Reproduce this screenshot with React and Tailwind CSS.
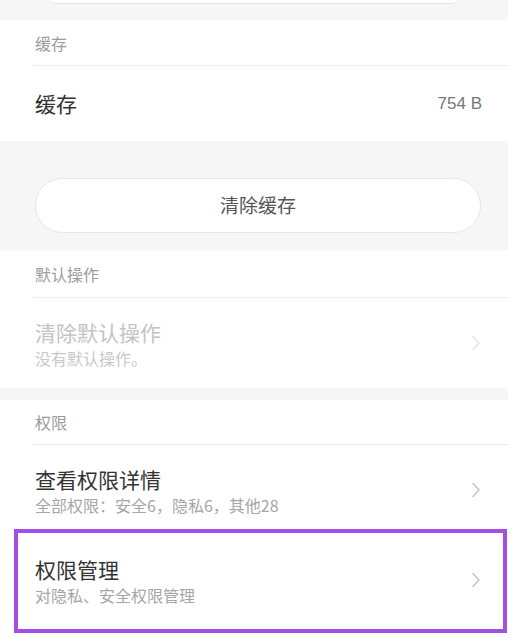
import React from "react";

const font = { fontFamily: '"Noto Sans CJK SC", "Noto Sans", sans-serif' };

function Chevron({ light }) {
  return (
    <svg width="10" height="16" viewBox="0 0 10 16" fill="none">
      <path
        d="M2 1.5 L8 8 L2 14.5"
        stroke={light ? "#e4e4e4" : "#c4c4c4"}
        strokeWidth="1.5"
        strokeLinecap="round"
        strokeLinejoin="round"
      />
    </svg>
  );
}

export default function App() {
  return (
    <div className="w-[520px] h-[641px] bg-white overflow-hidden" style={font}>
      <div className="w-[508px]">
        {/* top gray band with bottom of previous button */}
        <div className="h-[20px] bg-[#f6f6f6]">
          <div className="mx-[52px] h-[4px] bg-white border-b border-[#e4e4e4] rounded-b-full" />
        </div>

        {/* cache section */}
        <div className="bg-white">
          <div className="h-[46px] flex items-center ml-[33px] pl-[2px] border-b border-[#ededed] text-[16px] text-[#9c9c9c]">
            缓存
          </div>
          <div className="h-[75px] flex items-center justify-between pl-[35px] pr-[26px]">
            <span className="text-[21px] text-[#333]">缓存</span>
            <span className="text-[17px] text-[#777]" style={{ fontFamily: '"Liberation Sans", sans-serif' }}>754 B</span>
          </div>
        </div>

        {/* gray with button */}
        <div className="h-[109px] bg-[#f6f6f6] pl-[35px] pr-[27px] pt-[37px]">
          <div className="w-full h-[55px] rounded-full bg-white border border-[#e6e6e6] flex items-center justify-center text-[19px] text-[#555]">
            清除缓存
          </div>
        </div>

        {/* default action section */}
        <div className="bg-white">
          <div className="h-[48px] flex items-center ml-[33px] pl-[2px] border-b border-[#ededed] text-[16px] text-[#9c9c9c]">
            默认操作
          </div>
          <div className="h-[90px] flex items-center justify-between pl-[35px] pr-[27px]">
            <div className="flex flex-col">
              <span className="text-[21px] leading-[30px] text-[#c4c4c4]">清除默认操作</span>
              <span className="text-[16px] leading-[23px] text-[#c8c8c8]">没有默认操作。</span>
            </div>
            <Chevron light />
          </div>
        </div>

        <div className="h-[12px] bg-[#f6f6f6]" />

        {/* permissions section */}
        <div className="bg-white">
          <div className="h-[45px] flex items-center ml-[33px] pl-[2px] border-b border-[#e8e8e8] text-[16px] text-[#9c9c9c]">
            权限
          </div>
          <div className="h-[84px] flex items-center justify-between pl-[35px] pr-[27px] pt-[6px]">
            <div className="flex flex-col">
              <span className="text-[21px] leading-[30px] text-[#333]">查看权限详情</span>
              <span className="text-[16px] leading-[23px] text-[#a6a6a6]">全部权限：安全6，隐私6，其他28</span>
            </div>
            <Chevron />
          </div>
          <div className="ml-[14px] mr-[1px] h-[104px] border-[4px] border-[#a24fe4] flex items-center justify-between pl-[17px] pr-[22px] pb-[2px]">
            <div className="flex flex-col">
              <span className="text-[21px] leading-[30px] text-[#333]">权限管理</span>
              <span className="text-[16px] leading-[23px] text-[#a6a6a6]">对隐私、安全权限管理</span>
            </div>
            <Chevron />
          </div>
        </div>
      </div>
    </div>
  );
}
